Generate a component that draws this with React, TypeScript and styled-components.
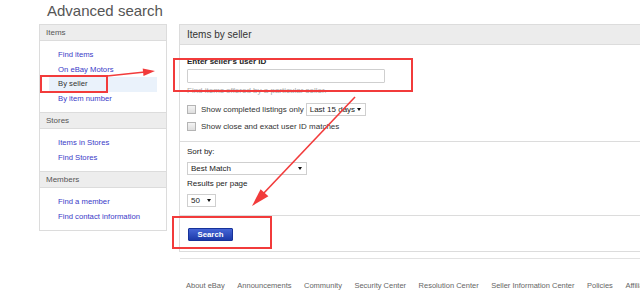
import React from "react"
import styled, { createGlobalStyle } from "styled-components"

const GlobalStyle = createGlobalStyle`
    html, body {
        margin: 0;
        padding: 0;
        background: #fff;
        font-family: "Liberation Sans", Arial, sans-serif;
        overflow: hidden;
    }
`

const sidebar = [
    { title: "Items", links: ["Find items", "On eBay Motors", "By seller", "By item number"] },
    { title: "Stores", links: ["Items in Stores", "Find Stores"] },
    { title: "Members", links: ["Find a member", "Find contact information"] },
]

const footerLinks = [
    "About eBay",
    "Announcements",
    "Community",
    "Security Center",
    "Resolution Center",
    "Seller Information Center",
    "Policies",
    "Affiliates",
]

export default function App() {
    return (
        <Page>
            <GlobalStyle />
            <Title>Advanced search</Title>
            <Columns>
                <Sidebar>
                    {sidebar.map((group, i) => (
                        <div key={group.title}>
                            <SideHeader $first={i === 0}>{group.title}</SideHeader>
                            <LinkList>
                                {group.links.map((l) => (
                                    <SideLink key={l} $active={l === "By seller"}>{l}</SideLink>
                                ))}
                            </LinkList>
                        </div>
                    ))}
                </Sidebar>

                <MainColumn>
                    <Panel>
                        <PanelHeader>Items by seller</PanelHeader>
                        <Section>
                            <Label>Enter seller's user ID</Label>
                            <TextInput />
                            <Help>Find items offered by a particular seller.</Help>
                            <CheckRow $top={6}>
                                <Check />
                                <span>Show completed listings only</span>
                                <SelectBox $width={60}>Last 15 days</SelectBox>
                            </CheckRow>
                            <CheckRow $top={4}>
                                <Check />
                                <span>Show close and exact user ID matches</span>
                            </CheckRow>
                        </Section>
                        <Section $padTop={4}>
                            <Label $normal>Sort by:</Label>
                            <SelectBox $width={120} $top={4}>Best Match</SelectBox>
                            <Label $normal $top={3}>Results per page</Label>
                            <SelectBox $width={29} $top={4}>50</SelectBox>
                        </Section>
                        <ButtonArea>
                            <SearchButton>Search</SearchButton>
                        </ButtonArea>
                    </Panel>
                    <Rule />
                    <Footer>
                        {footerLinks.map((f) => (
                            <FooterLink key={f}>{f}</FooterLink>
                        ))}
                    </Footer>
                </MainColumn>
            </Columns>

            <Marks width="640" height="290" viewBox="0 0 640 290">
                <g fill="none" stroke="#f23b3b" strokeWidth="2">
                    <rect x="41" y="76" width="66" height="16" />
                    <rect x="174" y="59" width="238" height="32" />
                    <rect x="173" y="217" width="98" height="31" />
                    <line x1="107" y1="76" x2="145" y2="72" strokeWidth="1.6" />
                    <line x1="355" y1="97" x2="262" y2="195" strokeWidth="1.6" />
                </g>
                <g fill="#f23b3b">
                    <polygon points="155,71 143.5,75.9 142.7,68.6" />
                    <polygon points="252,206 268.4,196.3 260.6,189.2" />
                    <polygon points="262,195 265,193.5 258,200 256,199" />
                </g>
            </Marks>
        </Page>
    )
}

const Page = styled.div`
    position: relative;
    width: 640px;
    height: 290px;
    overflow: hidden;
`

const Title = styled.h1`
    margin: 0;
    padding: 2px 0 5px 47px;
    font-size: 15px;
    line-height: 17px;
    font-weight: normal;
    color: #555;
`

const Columns = styled.div`
    display: flex;
    align-items: flex-start;
    gap: 12px;
    padding-left: 39px;
`

const Sidebar = styled.div`
    width: 126px;
    flex: none;
    border: 1px solid #dcdcdc;
    background: #fff;
`

const SideHeader = styled.div<{ $first?: boolean }>`
    height: 15px;
    line-height: 15px;
    padding-left: 6px;
    font-size: 8px;
    color: #555;
    background: #ededed;
    border-bottom: 1px solid #dcdcdc;
    border-top: ${(p) => (p.$first ? "none" : "1px solid #dcdcdc")};
`

const LinkList = styled.div`
    display: flex;
    flex-direction: column;
    padding: 7px 9px 6px;
`

const SideLink = styled.a<{ $active?: boolean }>`
    display: block;
    padding-left: 9px;
    font-size: 7.7px;
    line-height: 14.5px;
    color: ${(p) => (p.$active ? "#333" : "#3a3ac8")};
    background: ${(p) => (p.$active ? "#eaf2fb" : "transparent")};
    cursor: pointer;
`

const MainColumn = styled.div`
    flex: none;
    width: 520px;
    display: flex;
    flex-direction: column;
`

const Panel = styled.div`
    border-left: 1px solid #dcdcdc;
    border-bottom: 1px solid #dcdcdc;
    border-top: 1px solid #dcdcdc;
`

const PanelHeader = styled.div`
    height: 19px;
    line-height: 19px;
    padding-left: 7px;
    font-size: 10px;
    color: #333;
    background: #ececec;
    border-bottom: 1px solid #dcdcdc;
`

const Section = styled.div<{ $padTop?: number }>`
    display: flex;
    flex-direction: column;
    align-items: flex-start;
    padding: ${(p) => p.$padTop ?? 11}px 7px 8px;
    border-bottom: 1px solid #dcdcdc;
    font-size: 8px;
    color: #333;
`

const Label = styled.div<{ $normal?: boolean; $top?: number }>`
    margin-top: ${(p) => p.$top ?? 0}px;
    font-size: 8px;
    line-height: 12px;
    font-weight: ${(p) => (p.$normal ? "normal" : "bold")};
    color: #222;
`

const TextInput = styled.div`
    margin-top: 1px;
    width: 196px;
    height: 12px;
    border: 1px solid #cfcfcf;
    border-radius: 1px;
    background: #fff;
`

const Help = styled.div`
    margin-top: 2px;
    font-size: 8px;
    line-height: 12px;
    color: #aaa;
`

const CheckRow = styled.div<{ $top: number }>`
    display: flex;
    align-items: center;
    height: 13px;
    margin-top: ${(p) => p.$top}px;
    font-size: 8px;
    color: #333;
`

const Check = styled.span`
    width: 7px;
    height: 7px;
    margin-right: 5px;
    border: 1px solid #b4b4b4;
    background: linear-gradient(#f4f4f4, #dedede);
`

const SelectBox = styled.div<{ $width: number; $top?: number }>`
    position: relative;
    box-sizing: border-box;
    width: ${(p) => p.$width}px;
    height: 13px;
    margin-top: ${(p) => p.$top ?? 0}px;
    margin-left: ${(p) => (p.$top === undefined ? 2 : 0)}px;
    padding-left: 3px;
    line-height: 11px;
    font-size: 8px;
    color: #222;
    border: 1px solid #cfcfcf;
    background: #fff;

    &::after {
        content: "";
        position: absolute;
        right: 4px;
        top: 4px;
        border-left: 2.5px solid transparent;
        border-right: 2.5px solid transparent;
        border-top: 3px solid #111;
    }
`

const ButtonArea = styled.div`
    padding: 12px 7px 10px 8px;
`

const SearchButton = styled.button`
    display: block;
    width: 45px;
    height: 13px;
    padding: 0;
    border: 1px solid #17329a;
    border-radius: 1px;
    background: linear-gradient(#4565d6, #1c3aa9);
    color: #fff;
    font-family: "Liberation Sans", Arial, sans-serif;
    font-size: 7.8px;
    font-weight: bold;
    line-height: 11px;
`

const Rule = styled.div`
    margin-top: 6px;
    margin-left: 1px;
    height: 1px;
    background: #e2e2e2;
`

const Footer = styled.div`
    display: flex;
    gap: 12.5px;
    margin-top: 22px;
    padding-left: 7px;
    white-space: nowrap;
`

const FooterLink = styled.a`
    font-size: 7.5px;
    line-height: 10px;
    color: #666;
`

const Marks = styled.svg`
    position: absolute;
    left: 0;
    top: 0;
    pointer-events: none;
`
